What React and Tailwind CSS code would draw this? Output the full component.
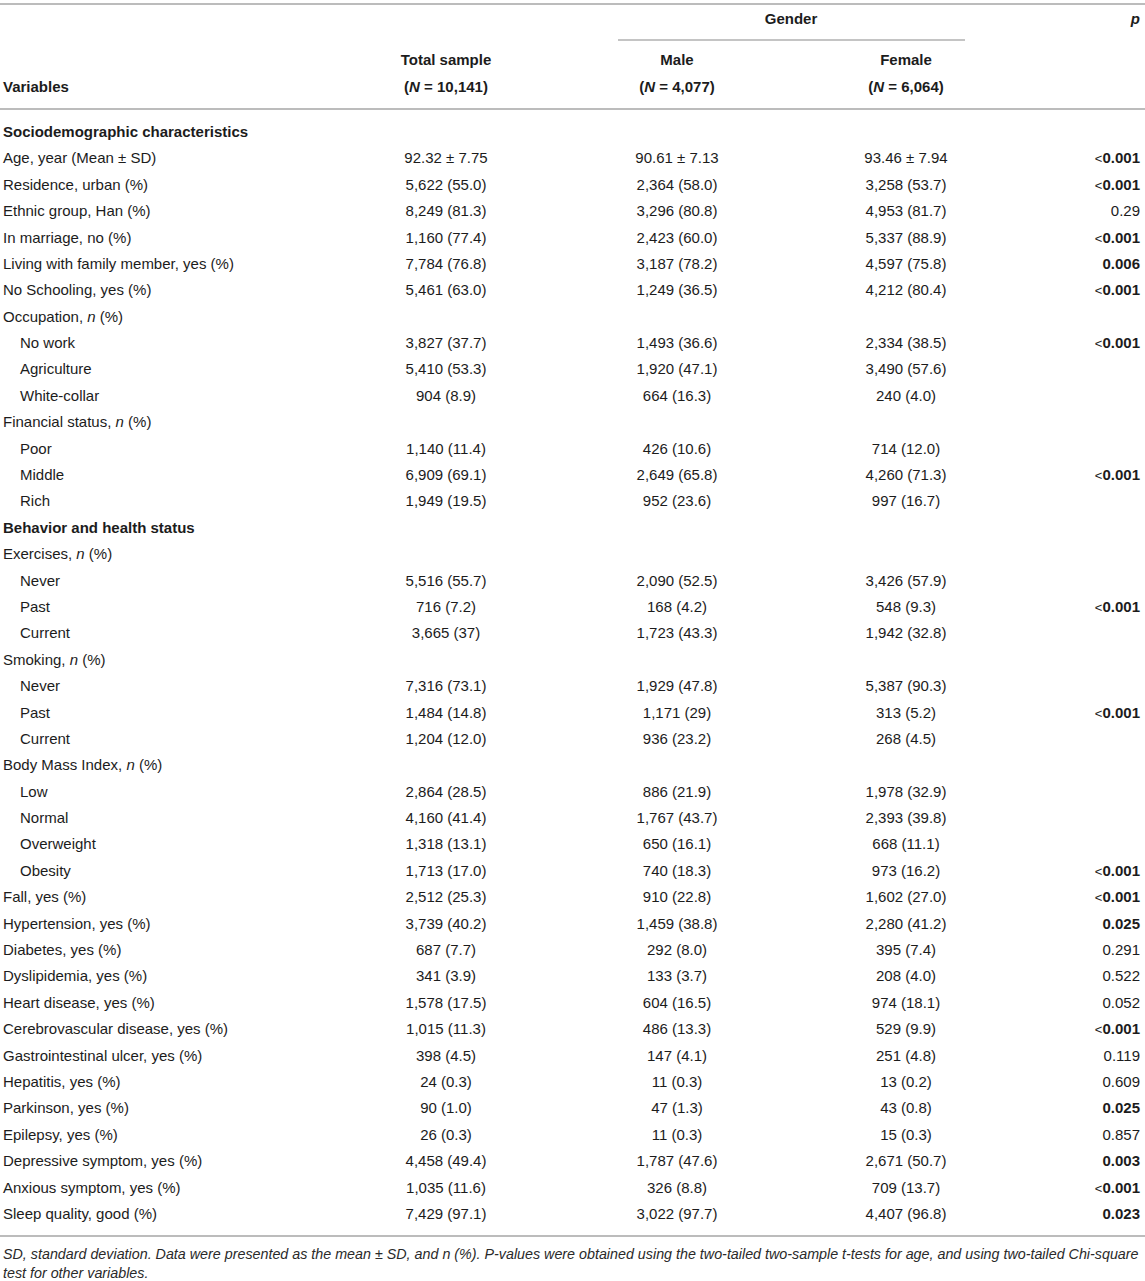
const rows = [
  { label: 'Sociodemographic characteristics', head: true },
  { label: 'Age, year (Mean ± SD)', t: '92.32 ± 7.75', m: '90.61 ± 7.13', f: '93.46 ± 7.94', p: '<0.001', b: true },
  { label: 'Residence, urban (%)', t: '5,622 (55.0)', m: '2,364 (58.0)', f: '3,258 (53.7)', p: '<0.001', b: true },
  { label: 'Ethnic group, Han (%)', t: '8,249 (81.3)', m: '3,296 (80.8)', f: '4,953 (81.7)', p: '0.29' },
  { label: 'In marriage, no (%)', t: '1,160 (77.4)', m: '2,423 (60.0)', f: '5,337 (88.9)', p: '<0.001', b: true },
  { label: 'Living with family member, yes (%)', t: '7,784 (76.8)', m: '3,187 (78.2)', f: '4,597 (75.8)', p: '0.006', b: true },
  { label: 'No Schooling, yes (%)', t: '5,461 (63.0)', m: '1,249 (36.5)', f: '4,212 (80.4)', p: '<0.001', b: true },
  { label: 'Occupation, ', n: true },
  { label: 'No work', sub: true, t: '3,827 (37.7)', m: '1,493 (36.6)', f: '2,334 (38.5)', p: '<0.001', b: true },
  { label: 'Agriculture', sub: true, t: '5,410 (53.3)', m: '1,920 (47.1)', f: '3,490 (57.6)' },
  { label: 'White-collar', sub: true, t: '904 (8.9)', m: '664 (16.3)', f: '240 (4.0)' },
  { label: 'Financial status, ', n: true },
  { label: 'Poor', sub: true, t: '1,140 (11.4)', m: '426 (10.6)', f: '714 (12.0)' },
  { label: 'Middle', sub: true, t: '6,909 (69.1)', m: '2,649 (65.8)', f: '4,260 (71.3)', p: '<0.001', b: true },
  { label: 'Rich', sub: true, t: '1,949 (19.5)', m: '952 (23.6)', f: '997 (16.7)' },
  { label: 'Behavior and health status', head: true },
  { label: 'Exercises, ', n: true },
  { label: 'Never', sub: true, t: '5,516 (55.7)', m: '2,090 (52.5)', f: '3,426 (57.9)' },
  { label: 'Past', sub: true, t: '716 (7.2)', m: '168 (4.2)', f: '548 (9.3)', p: '<0.001', b: true },
  { label: 'Current', sub: true, t: '3,665 (37)', m: '1,723 (43.3)', f: '1,942 (32.8)' },
  { label: 'Smoking, ', n: true },
  { label: 'Never', sub: true, t: '7,316 (73.1)', m: '1,929 (47.8)', f: '5,387 (90.3)' },
  { label: 'Past', sub: true, t: '1,484 (14.8)', m: '1,171 (29)', f: '313 (5.2)', p: '<0.001', b: true },
  { label: 'Current', sub: true, t: '1,204 (12.0)', m: '936 (23.2)', f: '268 (4.5)' },
  { label: 'Body Mass Index, ', n: true },
  { label: 'Low', sub: true, t: '2,864 (28.5)', m: '886 (21.9)', f: '1,978 (32.9)' },
  { label: 'Normal', sub: true, t: '4,160 (41.4)', m: '1,767 (43.7)', f: '2,393 (39.8)' },
  { label: 'Overweight', sub: true, t: '1,318 (13.1)', m: '650 (16.1)', f: '668 (11.1)' },
  { label: 'Obesity', sub: true, t: '1,713 (17.0)', m: '740 (18.3)', f: '973 (16.2)', p: '<0.001', b: true },
  { label: 'Fall, yes (%)', t: '2,512 (25.3)', m: '910 (22.8)', f: '1,602 (27.0)', p: '<0.001', b: true },
  { label: 'Hypertension, yes (%)', t: '3,739 (40.2)', m: '1,459 (38.8)', f: '2,280 (41.2)', p: '0.025', b: true },
  { label: 'Diabetes, yes (%)', t: '687 (7.7)', m: '292 (8.0)', f: '395 (7.4)', p: '0.291' },
  { label: 'Dyslipidemia, yes (%)', t: '341 (3.9)', m: '133 (3.7)', f: '208 (4.0)', p: '0.522' },
  { label: 'Heart disease, yes (%)', t: '1,578 (17.5)', m: '604 (16.5)', f: '974 (18.1)', p: '0.052' },
  { label: 'Cerebrovascular disease, yes (%)', t: '1,015 (11.3)', m: '486 (13.3)', f: '529 (9.9)', p: '<0.001', b: true },
  { label: 'Gastrointestinal ulcer, yes (%)', t: '398 (4.5)', m: '147 (4.1)', f: '251 (4.8)', p: '0.119' },
  { label: 'Hepatitis, yes (%)', t: '24 (0.3)', m: '11 (0.3)', f: '13 (0.2)', p: '0.609' },
  { label: 'Parkinson, yes (%)', t: '90 (1.0)', m: '47 (1.3)', f: '43 (0.8)', p: '0.025', b: true },
  { label: 'Epilepsy, yes (%)', t: '26 (0.3)', m: '11 (0.3)', f: '15 (0.3)', p: '0.857' },
  { label: 'Depressive symptom, yes (%)', t: '4,458 (49.4)', m: '1,787 (47.6)', f: '2,671 (50.7)', p: '0.003', b: true },
  { label: 'Anxious symptom, yes (%)', t: '1,035 (11.6)', m: '326 (8.8)', f: '709 (13.7)', p: '<0.001', b: true },
  { label: 'Sleep quality, good (%)', t: '7,429 (97.1)', m: '3,022 (97.7)', f: '4,407 (96.8)', p: '0.023', b: true },
];

const cols = 'grid grid-cols-[330px_232px_230px_228px_125px]';

function PValue({ p, b }) {
  if (!p) return null;
  if (p.startsWith('<')) {
    return <span className={b ? 'font-bold' : ''}><span className="font-normal text-[13px]">&lt;</span>{p.slice(1)}</span>;
  }
  return <span className={b ? 'font-bold' : ''}>{p}</span>;
}

export default function App() {
  return (
    <div className="w-[1145px] bg-white text-[15px] text-[#1c1c1c]" style={{ fontFamily: '"Liberation Sans", Arial, sans-serif' }}>
      <div className="pt-[3px]"><div className="h-[2px] bg-[#bcbcbc]" /></div>

      <div className={cols}>
        <div />
        <div />
        <div className="col-span-2 flex flex-col">
          <div className="leading-[28px] text-center font-bold">Gender</div>
          <div className="h-[2px] bg-[#c4c4c4] ml-[56px] mr-[55px] mt-[6px]" />
        </div>
        <div className="leading-[28px] text-right pr-[5px] font-bold italic">p</div>
      </div>

      <div className={`${cols} pt-[5px] pb-[8px] font-bold leading-[27px]`}>
        <div className="pl-[3px] pt-[27px]">Variables</div>
        <div className="text-center">Total sample<br />(<i>N</i> = 10,141)</div>
        <div className="text-center">Male<br />(<i>N</i> = 4,077)</div>
        <div className="text-center">Female<br />(<i>N</i> = 6,064)</div>
        <div />
      </div>
      <div className="h-[2px] bg-[#bcbcbc]" />

      <div className="pt-[9px] pb-[8px]">
        {rows.map((r, i) => (
          <div key={i} className={`${cols} h-[26.4px] items-center`}>
            <div className={`${r.sub ? 'pl-[20px]' : 'pl-[3px]'} ${r.head ? 'font-bold' : ''} whitespace-nowrap`}>
              {r.label}{r.n && <><i>n</i> (%)</>}
            </div>
            <div className="text-center">{r.t}</div>
            <div className="text-center">{r.m}</div>
            <div className="text-center">{r.f}</div>
            <div className="text-right pr-[5px]"><PValue p={r.p} b={r.b} /></div>
          </div>
        ))}
      </div>
      <div className="h-[2px] bg-[#bcbcbc]" />

      <p className="pl-[3px] pt-[8px] italic text-[14.3px] leading-[19px] text-[#2a2a2a]">
        <span className="whitespace-nowrap">SD, standard deviation. Data were presented as the mean ± SD, and n (%). P-values were obtained using the two-tailed two-sample t-tests for age, and using two-tailed Chi-square</span>
        <br />test for other variables.
      </p>
    </div>
  );
}
